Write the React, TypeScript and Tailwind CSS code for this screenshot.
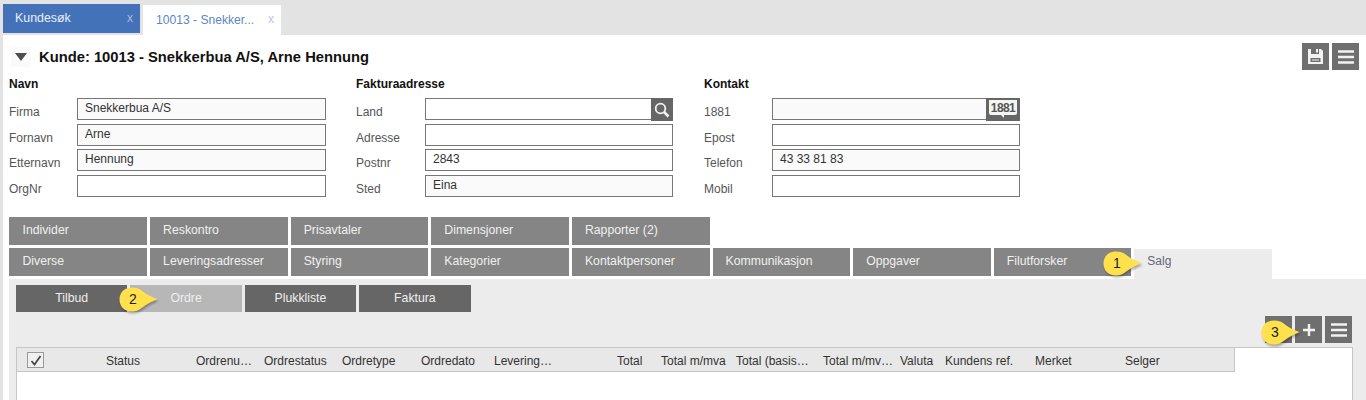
import React from "react";

const Field = ({ label, value = "", shaded = false, addon, lw = "w-[68px]", iw = "w-[248px]" }: { label: string; value?: string; shaded?: boolean; addon?: React.ReactNode; lw?: string; iw?: string }) => (
  <div className="flex h-[25.5px] items-start">
    <span className={`${lw} pt-[7px] text-[12px] leading-[14px] text-[#555]`}>{label}</span>
    <div className={`relative flex h-[22px] ${iw} items-center border border-[#777] pl-[7px] text-[12px] text-[#333] ${shaded ? "bg-[#fafafa]" : "bg-white"}`}>
      <span className="-mt-[2px]">{value}</span>
      {addon}
    </div>
  </div>
);

const Col = ({ title, className, children }: { title: string; className: string; children: React.ReactNode }) => (
  <div className={className}>
    <div className="mb-[6px] h-[15px] text-[12px] font-bold leading-[15px] text-[#111]">{title}</div>
    {children}
  </div>
);

const Tab = ({ label }: { label: string }) => (
  <div className="flex h-[28px] w-[137.61px] items-center bg-[#858585] pb-[2px] pl-[13px] text-[12.25px] text-[#f0f0f0]">{label}</div>
);

const SubTab = ({ label, light = false }: { label: string; light?: boolean }) => (
  <div className={`flex h-[27px] w-[111.4px] items-center justify-center text-[12.25px] text-[#efefef] ${light ? "bg-[#b7b7b7]" : "bg-[#666]"}`}>{label}</div>
);

const Callout = ({ n, className }: { n: string; className: string }) => (
  <div className={`absolute h-[26px] w-[40px] ${className}`}>
    <svg width="40" height="26" viewBox="0 0 40 26" className="absolute left-0 top-0 drop-shadow-[1px_2px_1px_rgba(0,0,0,0.3)]">
      <path d="M13 0.5 C18 0.5 21 2 24 4.5 C28 7.5 33 10.5 38.5 12 C33 14.5 28 17 24 20 C20 23 17 24.5 13 24.5 C5 24.5 0.5 19 0.5 12.5 C0.5 6 5 0.5 13 0.5 Z" fill="#ffe04d" />
    </svg>
    <span className="absolute left-0 top-[4px] w-[28px] text-center text-[14px] leading-[16px] text-[#222]">{n}</span>
  </div>
);

const Burger = () => (
  <svg width="16" height="14" viewBox="0 0 16 14">
    <path d="M0 1.5h16M0 7h16M0 12.5h16" stroke="#f2f2f2" strokeWidth="2.4" />
  </svg>
);

const IconBtn = ({ children }: { children?: React.ReactNode }) => (
  <div className="flex h-[27px] w-[27px] items-center justify-center bg-[#6f6f6f]">{children}</div>
);

const columns: [string, string][] = [
  ["Status", "w-[90px]"],
  ["Ordrenu…", "w-[68px]"],
  ["Ordrestatus", "w-[78px]"],
  ["Ordretype", "w-[79px]"],
  ["Ordredato", "w-[73px]"],
  ["Levering…", "w-[123px]"],
  ["Total", "w-[44px]"],
  ["Total m/mva", "w-[75px]"],
  ["Total (basis…", "w-[87px]"],
  ["Total m/mv…", "w-[77px]"],
  ["Valuta", "w-[45px]"],
  ["Kundens ref.", "w-[90px]"],
  ["Merket", "w-[90px]"],
  ["Selger", "w-[60px]"],
];

export default function App() {
  return (
    <div className="relative h-[400px] w-[1366px] overflow-hidden bg-white text-[#333]" style={{ fontFamily: '"Liberation Sans", Arial, sans-serif' }}>
      {/* top tabs */}
      <div className="flex h-[35px] items-start gap-[3px] bg-[#e3e3e3] pl-[3px] pt-[4px]">
        <div className="flex h-[29px] w-[137px] items-center justify-between bg-[#4472b8] pl-[12px] pr-[7px] text-[12.4px] text-[#e8eef8]">
          <span>Kundesøk</span>
          <span className="-mt-[2px] text-[12px] text-[#a9bcdc]">x</span>
        </div>
        <div className="mt-[1px] flex h-[30px] w-[138px] items-center justify-between bg-white pl-[13px] pr-[7px] text-[12.1px] text-[#5b86c4]">
          <span>10013 - Snekker...</span>
          <span className="-mt-[2px] text-[12px] text-[#b5c7e4]">x</span>
        </div>
      </div>

      <div className="flex h-[365px] flex-col border-l-[3px] border-[#e3e3e3] bg-white">
        {/* title */}
        <div className="flex h-[43px] shrink-0 items-center">
          <div className="ml-[8px] flex h-[20px] w-[20px] items-center justify-center bg-[#fafafa]">
            <svg width="12" height="8" viewBox="0 0 12 8"><path d="M0 0h12L6 8z" fill="#4d4d4d" /></svg>
          </div>
          <h1 className="ml-[8px] text-[14.75px] font-bold leading-[20px] text-[#111]">Kunde: 10013 - Snekkerbua A/S, Arne Hennung</h1>
          <div className="ml-auto mr-[7px] flex gap-[3px]">
            <IconBtn>
              <svg width="15" height="15" viewBox="0 0 15 15">
                <path fillRule="evenodd" d="M0 0h3v5h8V0h2l2 2v13H0zM2.5 9v4h10V9z M8 0h2v3.5H8z" fill="#f2f2f2" />
                <path d="M4 11h7" stroke="#f2f2f2" strokeWidth="1" />
              </svg>
            </IconBtn>
            <IconBtn><Burger /></IconBtn>
          </div>
        </div>

        {/* form */}
        <div className="flex h-[139px] shrink-0 pl-[6px] pt-[-1px]">
          <Col title="Navn" className="w-[347px] -mt-[1px]">
            <Field iw="w-[249px]" label="Firma" value="Snekkerbua A/S" shaded />
            <Field iw="w-[249px]" label="Fornavn" value="Arne" shaded />
            <Field iw="w-[249px]" label="Etternavn" value="Hennung" shaded />
            <Field iw="w-[249px]" label="OrgNr" />
          </Col>
          <Col title="Fakturaadresse" className="w-[348px] -mt-[1px]">
            <Field
              lw="w-[69px]"
              label="Land"
              addon={
                <div className="absolute -right-px -top-px flex h-[23px] w-[22px] items-center justify-center bg-[#666]">
                  <svg width="16" height="16" viewBox="0 0 16 16" fill="none" stroke="#f2f2f2">
                    <circle cx="6.5" cy="6.5" r="4.8" strokeWidth="1.8" />
                    <path d="M10 10l4.5 4.5" strokeWidth="2.6" />
                  </svg>
                </div>
              }
            />
            <Field lw="w-[69px]" label="Adresse" />
            <Field lw="w-[69px]" label="Postnr" value="2843" />
            <Field lw="w-[69px]" label="Sted" value="Eina" shaded />
          </Col>
          <Col title="Kontakt" className="w-[320px] -mt-[1px]">
            <Field
              label="1881"
              shaded
              addon={
                <div className="absolute -right-px -top-px flex h-[23px] w-[34px] items-start justify-center bg-[#666] pt-[2px]">
                  <div className="relative flex h-[15px] w-[28px] items-center justify-center rounded-b-[2px] bg-[#f4f4f4] text-[12px] font-bold leading-none tracking-[-0.6px] text-[#555]">
                    1881
                    <span className="absolute bottom-[-3px] left-[12px] h-0 w-0 border-l-[3px] border-t-[3px] border-l-transparent border-t-[#f4f4f4]" />
                  </div>
                </div>
              }
            />
            <Field label="Epost" />
            <Field label="Telefon" value="43 33 81 83" shaded />
            <Field label="Mobil" />
          </Col>
        </div>

        {/* tab rows */}
        <div className="flex shrink-0 gap-[3px] pl-[6.49px]">
          {["Individer", "Reskontro", "Prisavtaler", "Dimensjoner", "Rapporter (2)"].map((t) => <Tab key={t} label={t} />)}
        </div>
        <div className="mt-[3px] flex shrink-0 items-start gap-[3px] pl-[6.49px]">
          {["Diverse", "Leveringsadresser", "Styring", "Kategorier", "Kontaktpersoner", "Kommunikasjon", "Oppgaver", "Filutforsker"].map((t) => <Tab key={t} label={t} />)}
          <div className="mt-[1px] flex h-[30px] w-[138px] items-center bg-[#ececec] pb-[6px] pl-[13px] text-[12px] text-[#667]">Salg</div>
        </div>

        {/* panel */}
        <div className="ml-[6px] flex h-[160px] shrink-0 flex-col bg-[#ececec] pl-[7px] pt-[6px]">
          <div className="flex gap-[3px]">
            <SubTab label="Tilbud" />
            <SubTab label="Ordre" light />
            <SubTab label="Plukkliste" />
            <SubTab label="Faktura" />
          </div>
          <div className="mr-[14px] mt-[4px] flex justify-end gap-[3px]">
            <IconBtn />
            <IconBtn>
              <svg width="12" height="12" viewBox="0 0 12 12"><path d="M6 0v12M0 6h12" stroke="#f2f2f2" strokeWidth="2.4" /></svg>
            </IconBtn>
            <IconBtn><Burger /></IconBtn>
          </div>
          <div className="mr-[13px] mt-[4px] flex-1 border border-[#c6c6c6] bg-white">
            <div className="flex h-[24px] w-[1218px] items-center border-b border-r border-[#c6c6c6] bg-[#e8e8e8] text-[12px] text-[#333]">
              <div className="ml-[10px] mt-[1px] flex h-[16px] w-[17px] items-center justify-center border border-[#999] bg-[#f0f0f0]">
                <svg width="12" height="11" viewBox="0 0 12 11" fill="none"><path d="M1.5 6L4.5 9.5L10.5 1" stroke="#444" strokeWidth="1.7" /></svg>
              </div>
              <div className="ml-[62px] flex pt-[2px]">
                {columns.map(([c, w]) => <span key={c} className={`${w} whitespace-nowrap`}>{c}</span>)}
              </div>
            </div>
          </div>
        </div>
      </div>

      <Callout n="1" className="left-[1103px] top-[251px]" />
      <Callout n="2" className="left-[119px] top-[287px]" />
      <Callout n="3" className="left-[1261px] top-[320px]" />
    </div>
  );
}
